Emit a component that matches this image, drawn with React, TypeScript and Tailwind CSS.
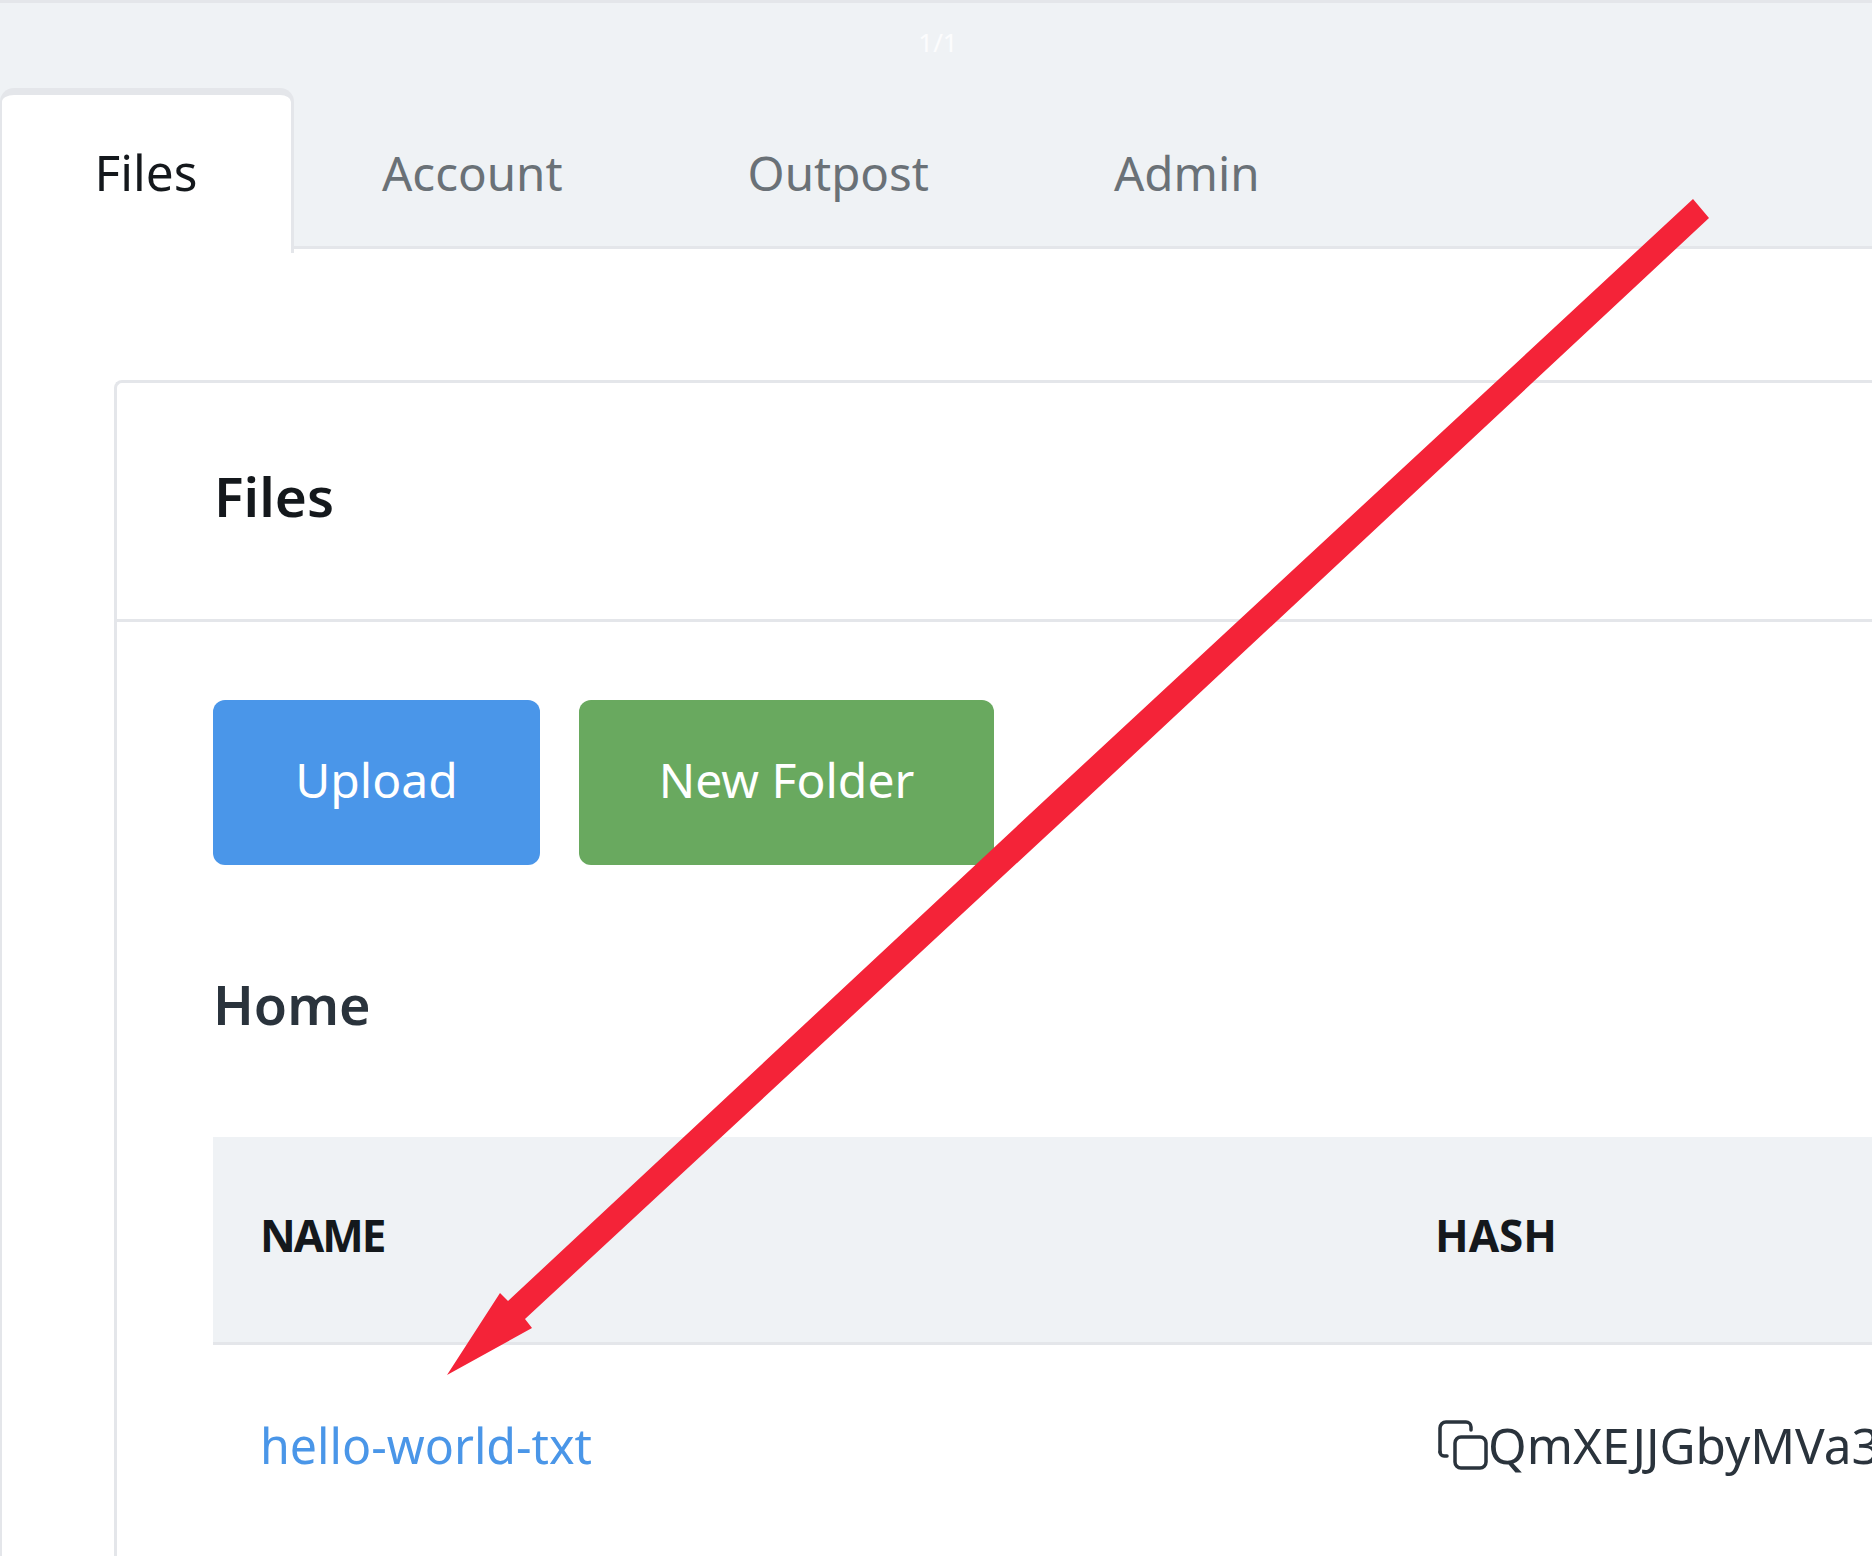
import React from "react";

export default function App() {
  return (
    <div className="relative w-[1872px] h-[1556px] overflow-hidden bg-white font-['Noto_Sans',sans-serif]">
      <div className="h-[88px] bg-[#eff2f5] border-t-[3px] border-[#e4e6ea] flex justify-center pt-[23px]">
        <span className="text-[26px] leading-[32px] text-white/80 ml-[4px]">1/1</span>
      </div>
      <div className="h-[161px] bg-[#eff2f5] border-b-[3px] border-[#e4e6ea] flex items-start">
        <div className="w-[294px] h-[165px] shrink-0 bg-white border-[#e4e6ea] border-t-[7px] border-r-[3px] border-l-[2px] rounded-t-[14px] flex justify-center pt-[46px] pr-[1px]">
          <span className="text-[49.5px] leading-[62px] text-[#14181c]">Files</span>
        </div>
        <div className="flex pt-[54px] pl-[88px] gap-[185px] text-[47.5px] leading-[62px] text-[#6a7177]">
          <span>Account</span>
          <span>Outpost</span>
          <span>Admin</span>
        </div>
      </div>
      <div className="h-[1307px] border-l-[2px] border-[#e4e6ea] pl-[112px] pt-[131px]">
        <div className="w-[1900px] h-[1300px] border-l-[3px] border-t-[3px] border-[#e4e6ea] rounded-tl-[8px]">
          <div className="h-[239px] border-b-[3px] border-[#e4e6ea] pl-[97px] pt-[82px]">
            <h2 className="text-[55px] leading-[62px] font-semibold text-[#14181c]">Files</h2>
          </div>
          <div className="pl-[96px] pt-[78px]">
            <div className="flex gap-[39px]">
              <button className="w-[327px] h-[165px] pb-[5px] rounded-[12px] bg-[#4a96e9] text-white text-[48px]">Upload</button>
              <button className="w-[415px] h-[165px] pb-[5px] rounded-[12px] bg-[#69a95f] text-white text-[48px]">New Folder</button>
            </div>
            <h3 className="mt-[108px] text-[54px] leading-[62px] font-semibold text-[#2a333c]">Home</h3>
            <div className="mt-[102px]">
              <div className="h-[208px] flex items-center bg-[#eff2f5] border-b-[3px] border-[#e4e6ea] pl-[47px] pb-[10px] text-[44px] font-bold text-[#14181c] whitespace-nowrap">
                <span className="w-[1175px] tracking-[-2px]">NAME</span>
                <span>HASH</span>
              </div>
              <div className="h-[200px] flex items-center pl-[47px] text-[48.3px] whitespace-nowrap">
                <a className="w-[1178px] text-[#4a96e8]">hello-world-txt</a>
                <svg width="50" height="50" viewBox="0 0 50 50" fill="none" stroke="#2a333c" strokeWidth="3.5" strokeLinecap="round" strokeLinejoin="round" className="shrink-0">
                  <rect x="17" y="17" width="31" height="31" rx="6" />
                  <path d="M2 32 V8 a6 6 0 0 1 6 -6 H28 a5 5 0 0 1 5 5 V10" />
                  <path d="M2 32 a4 4 0 0 0 4 4 H9" />
                </svg>
                <span className="text-[#2a333c] text-[49.5px]">QmXEJJGbyMVa3</span>
              </div>
            </div>
          </div>
        </div>
      </div>
      <svg className="absolute left-0 top-0 pointer-events-none" width="1872" height="1556" viewBox="0 0 1872 1556">
        <polygon fill="#f42338" points="1693,199 1709,218 1085,800 525,1319 532,1328 447,1375 500,1293 508,1301 1045,800" />
      </svg>
    </div>
  );
}
